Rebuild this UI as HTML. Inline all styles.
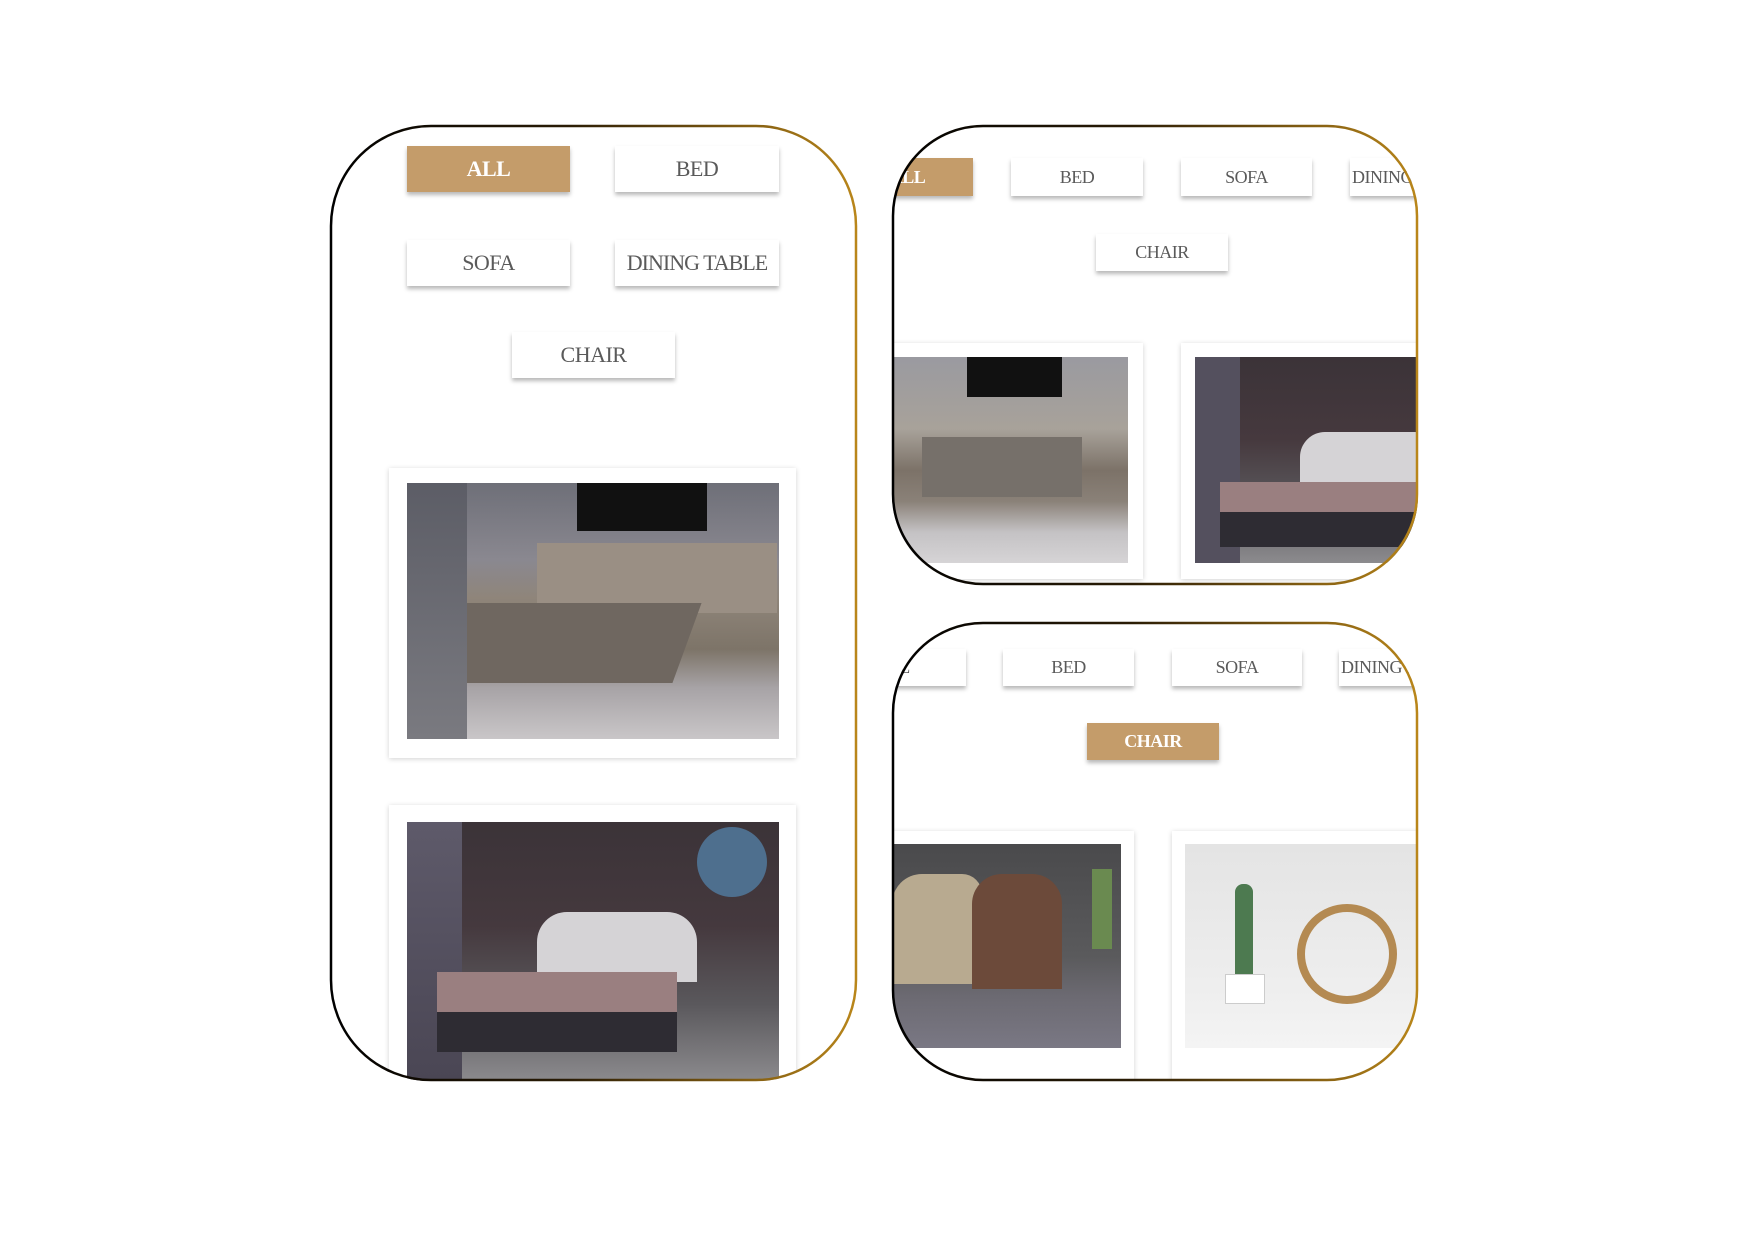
<!DOCTYPE html>
<html><head><meta charset="utf-8"><style>
*{margin:0;padding:0;box-sizing:border-box}
body{width:1748px;height:1240px;background:#fff;position:relative;overflow:hidden;font-family:"Liberation Serif",serif}
.panel{position:absolute;overflow:hidden;background:#fff}
.b{position:absolute;background:#fff;color:#5a5a5a;text-align:center;box-shadow:0 3px 4px rgba(0,0,0,.28);white-space:nowrap;overflow:hidden;letter-spacing:-0.5px}
.b.on{background:#c49c6a;color:#fff;font-weight:bold}
.card{position:absolute;background:#fff;box-shadow:0 1px 5px rgba(0,0,0,.18)}
.img{position:absolute;overflow:hidden}
svg.bd{position:absolute;left:0;top:0}
</style></head><body>

<div class="panel" style="left:330px;top:125px;width:527px;height:956px;border-radius:100px">
 <div class="b on" style="left:77px;top:21px;width:163px;height:46px;line-height:46px;font-size:22px">ALL</div>
 <div class="b" style="left:285px;top:21px;width:164px;height:46px;line-height:46px;font-size:22px">BED</div>
 <div class="b" style="left:77px;top:115px;width:163px;height:46px;line-height:46px;font-size:22px">SOFA</div>
 <div class="b" style="left:285px;top:115px;width:164px;height:46px;line-height:46px;font-size:22px;letter-spacing:-1px">DINING TABLE</div>
 <div class="b" style="left:182px;top:207px;width:163px;height:46px;line-height:46px;font-size:22px">CHAIR</div>
 <div class="card" style="left:59px;top:343px;width:407px;height:290px"></div>
 <div class="img" style="left:77px;top:358px;width:372px;height:256px;background:linear-gradient(180deg,#6e6f78 0%,#8a8890 30%,#8f857a 45%,#7d7468 65%,#a7a3a6 80%,#c9c6c8 100%)">
  <div style="position:absolute;left:170px;top:0;width:130px;height:48px;background:#111"></div>
  <div style="position:absolute;left:130px;top:60px;width:240px;height:70px;background:#9a8f84"></div>
  <div style="position:absolute;left:40px;top:120px;width:240px;height:80px;background:#6f6760;transform:skewX(-20deg)"></div>
  <div style="position:absolute;left:0;top:0;width:60px;height:256px;background:linear-gradient(#5c5d66,#7a7a80)"></div>
 </div>
 <div class="card" style="left:59px;top:680px;width:407px;height:300px"></div>
 <div class="img" style="left:77px;top:697px;width:372px;height:260px;background:linear-gradient(180deg,#3b3338 0%,#45393e 40%,#5a585c 70%,#8c8b8e 100%)">
  <div style="position:absolute;left:0;top:0;width:55px;height:260px;background:linear-gradient(#5e5a6a,#4a4654)"></div>
  <div style="position:absolute;left:130px;top:90px;width:160px;height:70px;background:#d5d3d6;border-radius:30px 30px 0 0"></div>
  <div style="position:absolute;left:30px;top:150px;width:240px;height:45px;background:#9a7f80"></div>
  <div style="position:absolute;left:30px;top:190px;width:240px;height:40px;background:#2e2c33"></div>
  <div style="position:absolute;left:290px;top:5px;width:70px;height:70px;border-radius:50%;background:#4e6f8e"></div>
 </div>
</div>
<svg class="bd" width="1748" height="1240"><defs>
<linearGradient id="g" x1="0" x2="1" y1="0" y2="0"><stop offset="0" stop-color="#000"/><stop offset=".45" stop-color="#2a1c05"/><stop offset="1" stop-color="#b9861a"/></linearGradient></defs>
<rect x="331" y="126" width="525" height="954" rx="100" fill="none" stroke="url(#g)" stroke-width="2.5"/>
</svg>

<div class="panel" style="left:892px;top:125px;width:526px;height:460px;border-radius:90px">
 <div class="b on" style="left:-50px;top:33px;width:131px;height:38px;line-height:38px;font-size:18px">ALL</div>
 <div class="b" style="left:119px;top:33px;width:132px;height:38px;line-height:38px;font-size:18px">BED</div>
 <div class="b" style="left:289px;top:33px;width:131px;height:38px;line-height:38px;font-size:18px">SOFA</div>
 <div class="b" style="left:458px;top:33px;width:131px;height:38px;line-height:38px;font-size:18px;text-align:left;padding-left:2px">DINING TABLE</div>
 <div class="b" style="left:204px;top:109px;width:132px;height:37px;line-height:37px;font-size:18px">CHAIR</div>
 <div class="card" style="left:-30px;top:218px;width:281px;height:236px"></div>
 <div class="img" style="left:0;top:232px;width:236px;height:206px;background:linear-gradient(180deg,#9a9aa0 0%,#a8a29a 35%,#7c7268 55%,#8a8178 70%,#c4c2c4 85%,#d6d4d6 100%)">
  <div style="position:absolute;left:75px;top:0;width:95px;height:40px;background:#111"></div>
  <div style="position:absolute;left:30px;top:80px;width:160px;height:60px;background:#76706a"></div>
 </div>
 <div class="card" style="left:289px;top:218px;width:260px;height:236px"></div>
 <div class="img" style="left:303px;top:232px;width:240px;height:206px;background:linear-gradient(180deg,#3b3338 0%,#46393e 40%,#5a585c 70%,#8c8b8e 100%)">
  <div style="position:absolute;left:0;top:0;width:45px;height:206px;background:#54505e"></div>
  <div style="position:absolute;left:105px;top:75px;width:140px;height:60px;background:#d5d3d6;border-radius:25px 25px 0 0"></div>
  <div style="position:absolute;left:25px;top:125px;width:220px;height:35px;background:#9a7f80"></div>
  <div style="position:absolute;left:25px;top:155px;width:200px;height:35px;background:#2e2c33"></div>
 </div>
</div>
<svg class="bd" width="1748" height="1240"><rect x="893" y="126" width="524" height="458" rx="90" fill="none" stroke="url(#g)" stroke-width="2.5"/></svg>

<div class="panel" style="left:892px;top:622px;width:526px;height:459px;border-radius:90px">
 <div class="b" style="left:-58px;top:27px;width:132px;height:37px;line-height:37px;font-size:18px;text-indent:-14px">ALL</div>
 <div class="b" style="left:111px;top:27px;width:131px;height:37px;line-height:37px;font-size:18px">BED</div>
 <div class="b" style="left:280px;top:27px;width:130px;height:37px;line-height:37px;font-size:18px">SOFA</div>
 <div class="b" style="left:447px;top:27px;width:131px;height:37px;line-height:37px;font-size:18px;text-align:left;padding-left:2px">DINING TABLE</div>
 <div class="b on" style="left:195px;top:101px;width:132px;height:37px;line-height:37px;font-size:18px">CHAIR</div>
 <div class="card" style="left:-30px;top:209px;width:272px;height:260px"></div>
 <div class="img" style="left:0;top:222px;width:229px;height:204px;background:linear-gradient(180deg,#4a4a4c 0%,#5a5a5c 55%,#6c6a72 75%,#7a7884 100%)">
  <div style="position:absolute;left:0;top:30px;width:90px;height:110px;background:#b8aa90;border-radius:30px 20px 0 0"></div>
  <div style="position:absolute;left:80px;top:30px;width:90px;height:115px;background:#6c4a3a;border-radius:30px 30px 0 0"></div>
  <div style="position:absolute;left:200px;top:25px;width:20px;height:80px;background:#6a8a50"></div>
 </div>
 <div class="card" style="left:280px;top:209px;width:260px;height:260px"></div>
 <div class="img" style="left:293px;top:222px;width:240px;height:204px;background:linear-gradient(180deg,#e4e4e4 0%,#eeeeee 70%,#f4f4f4 100%)">
  <div style="position:absolute;left:50px;top:40px;width:18px;height:100px;background:#4d7a50;border-radius:8px"></div>
  <div style="position:absolute;left:40px;top:130px;width:40px;height:30px;background:#fff;border:1px solid #ccc"></div>
  <div style="position:absolute;left:112px;top:60px;width:100px;height:100px;border-radius:50%;border:8px solid #b48a52"></div>
 </div>
</div>
<svg class="bd" width="1748" height="1240"><rect x="893" y="623" width="524" height="457" rx="90" fill="none" stroke="url(#g)" stroke-width="2.5"/></svg>

</body></html>
